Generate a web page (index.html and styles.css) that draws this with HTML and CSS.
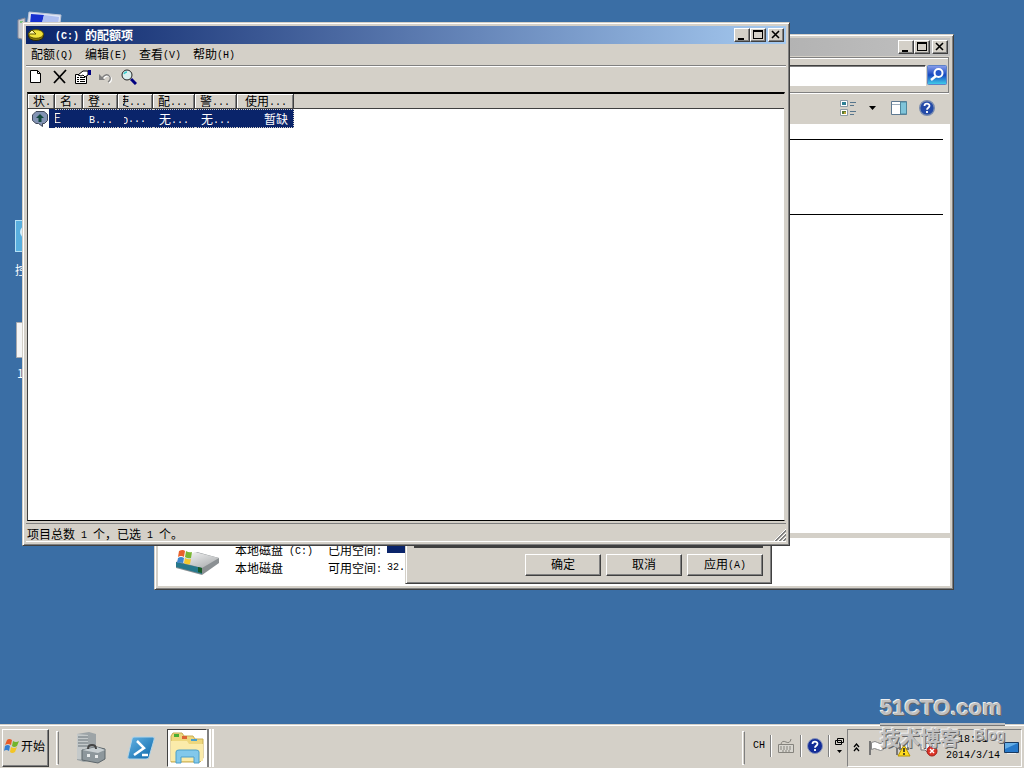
FILE: index.html
```
<!DOCTYPE html>
<html lang="zh-CN">
<head>
<meta charset="utf-8">
<title>(C:) 的配额项</title>
<link rel="stylesheet" href="styles.css">
</head>
<body>
<main class="desktop">
  <div class="shortcut computer">
    <svg width="48" height="36" viewBox="0 0 48 36"><path d="M3 9l7-2v22l-7-2z" fill="#c9cdd2" stroke="#889"/><path d="M5 11h3" stroke="#3b3"/><path d="M14 1l32 3-3 24-32-4z" fill="#dde5f5" stroke="#b9c2d4"/><path d="M16 3l13 1-5 20-10-1z" fill="#1730cf"/><path d="M29 4l15 2-2 15-18 3z" fill="#aebff0"/></svg>
  </div>
  <div class="shortcut control">
    <svg width="32" height="32" viewBox="0 0 32 32"><rect x=".5" y=".5" width="31" height="31" fill="#58aede" stroke="#b4e1f6"/><circle cx="11" cy="12" r="6" fill="#d8effa"/></svg>
    <span>控制</span>
  </div>
  <div class="shortcut file">
    <svg width="30" height="36" viewBox="0 0 30 36"><path d="M.5.5h29v35H.5z" fill="#f5f5f5" stroke="#a9aaae"/></svg>
    <span>1</span>
  </div>

  <section class="window explorer">
    <header class="titlebar inactive">
      <div class="caption-buttons">
        <button aria-label="最小化"><svg width="10" height="10" viewBox="0 0 10 10"><path d="M1 8h6v2H1z"/></svg></button>
        <button aria-label="最大化"><svg width="10" height="10" viewBox="0 0 10 10"><path d="M0 0h10v9H0zM1 2v6h8V2z" fill-rule="evenodd"/></svg></button>
        <button class="close" aria-label="关闭"><svg width="10" height="10" viewBox="0 0 10 10"><path d="M1 1l7 7M8 1L1 8" stroke="#000" stroke-width="1.600"/></svg></button>
      </div>
    </header>
    <div class="address">
      <input type="text" aria-label="搜索">
      <button class="search" aria-label="开始搜索"><svg width="20" height="20" viewBox="0 0 20 20"><defs><linearGradient id="sg" x2="0" y2="1"><stop stop-color="#8ca0ec"/><stop offset=".5" stop-color="#1648c0"/><stop offset="1" stop-color="#43d3ec"/></linearGradient></defs><rect x=".5" y=".5" width="19" height="19" rx="1" fill="url(#sg)" stroke="#5c82c8"/><circle cx="11.500" cy="8" r="4" fill="#2456c8" stroke="#fff" stroke-width="2"/><path d="M9 11l-5 4" stroke="#fff" stroke-width="2.500"/></svg></button>
    </div>
    <div class="commands">
      <svg width="16" height="16" viewBox="0 0 16 16"><path d="M.5.5h7v6h-7zM.5 9.500h7v6h-7z" fill="#fff" stroke="#8d9ba5"/><path d="M2 2h4v3H2z" fill="#2e7f94"/><path d="M2 11h4v3H2z" fill="#5b7b35"/><path d="M4 12h2v2H4z" fill="#c4a637"/><path d="M10 2.500h6M10 5.500h4M10 11.500h6M10 14.500h4" stroke="#57758c"/></svg>
      <svg class="drop" width="7" height="4" viewBox="0 0 7 4"><path d="M0 0h7L3.500 4z"/></svg>
      <svg class="pane" width="16" height="14" viewBox="0 0 16 14"><path d="M.5.5h15v13H.5z" fill="#fff" stroke="#5d7890"/><path d="M1 3.500h8" stroke="#9cadbc"/><path d="M9.500 1h6v12h-6z" fill="#7fc4da" stroke="#4e879d"/></svg>
      <svg width="16" height="16" viewBox="0 0 16 16"><circle cx="8" cy="8" r="7.300" fill="#234aa8" stroke="#7a8db0" stroke-width="1.400"/><path d="M5.500 6c0-3 5-3 5-.3 0 2-2.500 2-2.500 4M8 11v2" fill="none" stroke="#fff" stroke-width="1.800"/></svg>
    </div>
    <div class="files"><hr><hr></div>
    <div class="details">
      <svg width="46" height="28" viewBox="0 0 46 28"><defs><linearGradient id="disk" x2="1" y2="1"><stop stop-color="#fff"/><stop offset="1" stop-color="#a4a7a9"/></linearGradient></defs><path d="M1 13L22 3l22 6v5L27 26 1 19z" fill="#8b9093"/><path d="M1 12L20 3l24 6-17 10z" fill="url(#disk)"/><path d="M1 13l26 6v6L1 18z" fill="#26778b"/><path d="M23 18l4 1v5l-4-1z" fill="#175b27"/><path d="M4 2q4-2 6 0l-1 6q-3-2-6 0z" fill="#e8602a"/><path d="M11 2q3 2 6 1l-1 6q-3 1-6-1z" fill="#78b633"/><path d="M3 9q3-2 6 0l-1 5q-3-1-6 0z" fill="#3c86cf"/><path d="M10 9q3 2 6 1l-1 5q-3 1-6-1z" fill="#f4c92c"/></svg>
      <dl>
        <dt>本地磁盘<span class="latin"> (C:)</span></dt><dt>已用空间<span class="latin">:</span></dt><dd class="used"><meter min="0" max="1" value="1">已用</meter></dd>
        <dt>本地磁盘</dt><dt>可用空间<span class="latin">:</span></dt><dd class="latin">32.</dd>
      </dl>
    </div>
  </section>

  <section class="window dialog">
    <button>确定</button><button>取消</button><button>应用<span class="latin">(A)</span></button>
  </section>

  <section class="window quota">
    <header class="titlebar">
      <svg width="16" height="12" viewBox="0 0 16 12"><ellipse cx="8" cy="7" rx="7.500" ry="4.500" fill="#8a7a10" stroke="#2b2800"/><ellipse cx="8" cy="5" rx="7.500" ry="4.300" fill="#f0e23c" stroke="#5c5200"/><path d="M0 5l8 0-4-4z" fill="#fdf7a0" stroke="#5c5200"/></svg>
      <h1><span class="latin">(C:) </span>的配额项</h1>
      <div class="caption-buttons">
        <button aria-label="最小化"><svg width="10" height="10" viewBox="0 0 10 10"><path d="M1 8h6v2H1z"/></svg></button>
        <button aria-label="最大化"><svg width="10" height="10" viewBox="0 0 10 10"><path d="M0 0h10v9H0zM1 2v6h8V2z" fill-rule="evenodd"/></svg></button>
        <button class="close" aria-label="关闭"><svg width="10" height="10" viewBox="0 0 10 10"><path d="M1 1l7 7M8 1L1 8" stroke="#000" stroke-width="1.600"/></svg></button>
      </div>
    </header>
    <nav class="menu">
      <button>配额<span class="latin">(Q)</span></button><button>编辑<span class="latin">(E)</span></button><button>查看<span class="latin">(V)</span></button><button>帮助<span class="latin">(H)</span></button>
    </nav>
    <div class="toolbar">
      <button aria-label="新建"><svg width="16" height="16" viewBox="0 0 16 16"><path d="M1.500 1.500h7l3 3v9h-10z" fill="#fff" stroke="#000"/><path d="M8.500 1.500v3h3" fill="none" stroke="#000"/></svg></button>
      <button aria-label="删除"><svg width="16" height="16" viewBox="0 0 16 16"><path d="M2 2l11 12M14 1L2 14" stroke="#000" stroke-width="1.800"/></svg></button>
      <button aria-label="属性"><svg width="16" height="16" viewBox="0 0 16 16"><path d="M.5 5.500h11v9H.5z" fill="#fff" stroke="#000"/><path d="M2 8.500h2M5 8.500h5M2 10.500h2M5 10.500h5M2 12.500h2M5 12.500h5" stroke="#000"/><path d="M3 6l5-4h5v4l-3 2-2-2-2 1z" fill="#fff" stroke="#000"/><path d="M13 1h3v5h-3z" fill="#000080"/></svg></button>
      <button aria-label="撤消"><svg width="16" height="16" viewBox="0 0 16 16"><path d="M4 9q5-6 8-1 1 3-2 5" fill="none" stroke="#fff" stroke-width="1.500" transform="translate(1 1)"/><path d="M4 9q5-6 8-1 1 3-2 5" fill="none" stroke="#808080" stroke-width="1.300"/><path d="M1 5v6h6z" fill="#808080"/></svg></button>
      <button aria-label="查找"><svg width="16" height="16" viewBox="0 0 16 16"><path d="M10 10l5 5" stroke="#000080" stroke-width="3"/><circle cx="6" cy="6" r="5" fill="#d9eeee" stroke="#222"/><path d="M3 5q1-2 3-2" fill="none" stroke="#35cccc" stroke-width="1.500"/></svg></button>
    </div>
    <div class="list">
      <table>
        <colgroup><col class="c1"><col class="c2"><col class="c3"><col class="c3"><col class="c4"><col class="c4"><col class="c5"></colgroup>
        <thead><tr><th>状<i>.</i></th><th>名<i>.</i></th><th>登<i>..</i></th><th><span class="cut">使</span><i>...</i></th><th>配<i>...</i></th><th>警<i>...</i></th><th class="usage">使用<i>...</i></th></tr></thead>
        <tbody><tr><td class="state"><svg width="16" height="16" viewBox="0 0 16 16"><path d="M4 .5h8l3.500 3v6l-3 3h-2v3l-4-3H4l-3.500-3V4z" fill="#8293b4" stroke="#40495b"/><path d="M8 3l4 4H9.500v4h-3V7H4z" fill="#12483e"/></svg></td><td><span class="cut">正</span></td><td><i>B...</i></td><td><i><span class="cut half">D</span>...</i></td><td>无<i>...</i></td><td>无<i>...</i></td><td class="num">暂缺</td></tr></tbody>
      </table>
    </div>
    <footer class="status">
      <span>项目总数<span class="latin"> 1 </span>个，已选<span class="latin"> 1 </span>个。</span>
      <svg width="12" height="12" viewBox="0 0 12 12"><path d="M0 12L12 0M4 12l8-8M8 12l4-4" stroke="#fff"/><path d="M1 12L12 1M2 12L12 2M5 12l7-7M6 12l6-6M9 12l3-3M10 12l2-2" stroke="#808080"/></svg>
    </footer>
  </section>

  <footer class="taskbar">
    <button class="start"><svg width="16" height="16" viewBox="0 0 16 16"><path d="M3 2q2-2 5 0L7 7Q4 5 1 7z" fill="#e85b28"/><path d="M9 3q3 2 6 0l-2 5q-3 2-5 0z" fill="#72b52d"/><path d="M1 8q3-2 5 0l-1 5q-3-2-5 0z" fill="#347fd2"/><path d="M7 9q3 2 6 0l-2 5q-3 2-5 0z" fill="#f3c525"/></svg>开始</button>
    <span class="grip"></span>
    <button class="launch" aria-label="服务器管理器"><svg width="30" height="34" viewBox="0 0 30 34"><path d="M1 3l12-2 7 2v25L8 31l-7-2z" fill="#9da4a7"/><path d="M1 3l11 1v25L1 28z" fill="#c4c9ca"/><path d="M2 6h10M2 9h10M2 12h10M2 15h10" stroke="#687378"/><path d="M6 19l15-3 8 2v10l-7 4-16-3z" fill="#8d979c" stroke="#5d666b"/><path d="M6 19l16 3 7-3-8-3z" fill="#c7ced1"/><path d="M12 18q0-4 4-4t4 4" fill="none" stroke="#444" stroke-width="2"/><path d="M11 23h3v3h-3zM19 24h3v3h-3z" fill="#e7eaeb"/></svg></button>
    <button class="launch" aria-label="PowerShell"><svg width="30" height="26" viewBox="0 0 30 26"><defs><linearGradient id="ps" x2="1" y2="1"><stop stop-color="#67b4e4"/><stop offset="1" stop-color="#0966a9"/></linearGradient></defs><path d="M8 2h19q2 0 1 3l-5 17q0 2-3 2H3q-2 0-1-3L6 4q0-2 2-2z" fill="url(#ps)" stroke="#b4d5e8"/><path d="M11 6l7 7-10 7M16 20h6" fill="none" stroke="#fff" stroke-width="2.500"/></svg></button>
    <button class="launch active" aria-label="资源管理器"><svg width="34" height="32" viewBox="0 0 34 32"><path d="M1 4l2-3h9l2 3h9l2 3h8v19l-3 4H1z" fill="#eed77d" stroke="#c7ac55"/><path d="M4 2h5v3H4z" fill="#48ae34"/><path d="M12 4h5v3h-5z" fill="#dc6434"/><path d="M21 7h6v2h-6z" fill="#48a0cc"/><path d="M1 9h16l2 3h14v17H1z" fill="#fbebaa"/><path d="M6 20q0-2 3-2h17q3 0 3 2v11h-5v-6H11v6H6z" fill="#82c8eb" stroke="#4d9fc9"/></svg></button>
    <span class="stack"></span>
    <span class="spacer"></span>
    <span class="grip"></span>
    <div class="language">
      <span class="latin">CH</span>
      <span class="line"></span>
      <svg width="18" height="16" viewBox="0 0 18 16"><path d="M1.500 6.500h15v8h-15z" fill="#d8d6d0" stroke="#85837d"/><path d="M4 6q1-4 5-2t5-3" fill="none" stroke="#85837d"/><path d="M3 9h12M3 11h12M5 13h8" stroke="#85837d" stroke-dasharray="2 1"/></svg>
      <span class="line"></span>
      <svg width="16" height="16" viewBox="0 0 16 16"><circle cx="8" cy="8" r="7.500" fill="#132c97" stroke="#8794bb"/><path d="M5.500 6c0-3 5-3 5-.3 0 2-2.500 2-2.500 4M8 11v2" fill="none" stroke="#fff" stroke-width="1.800"/></svg>
      <span class="line"></span>
      <svg width="9" height="18" viewBox="0 0 9 18"><path d="M2.500 1.500h6v4h-6zM.5 3.500h6v4h-6z" fill="#d4d0c8" stroke="#000"/><path d="M2 13h5l-2.500 3z"/></svg>
    </div>
    <div class="tray">
      <svg width="7" height="9" viewBox="0 0 7 9"><path d="M1 4l2.500-3L6 4M1 8l2.500-3L6 8" fill="none" stroke="#000" stroke-width="1.300"/></svg>
      <svg width="18" height="18" viewBox="0 0 18 18"><path d="M2 2v14" stroke="#777" stroke-width="2"/><path d="M3.500 3.500q4-2 6 0t6 0v7q-3 2-6 0t-6 0z" fill="#fff" stroke="#888"/></svg>
      <svg width="18" height="18" viewBox="0 0 18 18"><path d="M3 1v15M6 4h8v6H6z" fill="#eee" stroke="#777" stroke-width="2"/><path d="M10 6l6 11H4z" fill="#ffdc20" stroke="#b59300"/><path d="M10 9v4M10 14v2" stroke="#222" stroke-width="1.500"/></svg>
      <svg width="18" height="18" viewBox="0 0 18 18"><path d="M1 6h4l5-5v15l-5-5H1z" fill="#f3f3f3" stroke="#777"/><circle cx="12" cy="12" r="5" fill="#dc3428" stroke="#a31c15"/><path d="M10 10l4 4M14 10l-4 4" stroke="#fff" stroke-width="1.500"/></svg>
      <time><span>18:51</span><span>2014/3/14</span></time>
      <svg class="show" width="15" height="14" viewBox="0 0 15 14"><path d="M.5 1.500h14v10H.5z" fill="#2678c9" stroke="#18395f"/><path d="M1 2h13L1 8z" fill="#63ade7"/><path d="M3 12h9v1H3z" fill="#eee"/></svg>
    </div>
  </footer>

  <aside class="watermark"><strong>51CTO.com</strong><div><span>技术博客</span><em>Blog</em></div></aside>
</main>
</body>
</html>
```
FILE: styles.css
```
* { box-sizing: border-box; }
body { margin: 0; font: 12px/16px "Noto Sans CJK SC", sans-serif; color: #000; }
button { padding: 0; border: 0; background: none; font: inherit; color: inherit; }
svg { display: block; flex: none; }
.latin, i { font-family: "Liberation Mono", monospace; font-size: 10px; font-style: normal; line-height: 0; vertical-align: 1px; white-space: pre; }
.desktop { position: relative; min-height: 100vh; overflow: hidden; background: #3a6ea5; }

.shortcut { position: absolute; color: #fff; }
.shortcut span { display: block; }
.computer { left: 15px; top: 11px; }
.control { left: 15px; top: 220px; }
.control span { margin-top: 10px; }
.file { left: 16px; top: 322px; }
.file span { margin: 7px 0 0 1px; }

.window { position: absolute; display: flex; flex-direction: column; background: #d4d0c8; border: 1px solid #d4d0c8; border-right-color: #404040; border-bottom-color: #404040; box-shadow: inset 1px 1px #fff, inset -1px -1px #808080; }
.quota { left: 22px; top: 22px; width: 768px; height: 524px; padding: 3px; }
.explorer { left: 154px; top: 34px; width: 800px; height: 556px; padding: 3px; }
.dialog { left: 405px; top: 530px; width: 367px; height: 54px; padding: 0 8px 7px; flex-direction: row; align-items: flex-end; justify-content: flex-end; gap: 5px; }
.dialog::before { content: ""; position: absolute; top: 15px; left: 8px; right: 8px; height: 2px; background: #404040; }
.dialog button { width: 76px; height: 22px; padding-bottom: 2px; }
.dialog button, .caption-buttons button, .start { background: #d4d0c8; border: 1px solid #fff; border-right-color: #404040; border-bottom-color: #404040; box-shadow: inset -1px -1px #808080; }

.titlebar { display: flex; align-items: center; flex: none; height: 18px; padding: 0 2px; background: linear-gradient(90deg, #0a246a, #a6caf0); color: #fff; }
.titlebar h1 { margin: 0 0 0 11px; font-size: 12px; line-height: 18px; }
.inactive { background: linear-gradient(90deg, #808080, #c0c0c0); }
.caption-buttons { display: flex; margin-left: auto; }
.caption-buttons button { display: flex; justify-content: center; width: 16px; height: 14px; padding-top: 1px; }
.caption-buttons .close { margin-left: 2px; }

.menu { display: flex; align-items: center; flex: none; gap: 12px; height: 22px; padding: 0 0 2px 5px; border-bottom: 1px solid #808080; box-shadow: 0 1px #fff; }
.menu button { white-space: nowrap; }
.toolbar { display: flex; align-items: center; flex: none; gap: 7px; height: 26px; padding: 0 3px 4px; }
.list { flex: 1; margin: 0 1px; border: 1px solid #000; border-color: #000 #d4d0c8 #000 #404040; border-top-width: 2px; background: linear-gradient(#d4d0c8 14px, #404040 14px, #404040 15px, #fff 15px); }
table { width: 266px; table-layout: fixed; border-collapse: separate; border-spacing: 0; }
.c1 { width: 27px; } .c2 { width: 28px; } .c3 { width: 35px; } .c4 { width: 42px; } .c5 { width: 57px; }
th, td { padding: 0 0 0 5px; white-space: nowrap; text-align: left; font-weight: normal; }
th { height: 15px; line-height: 14px; border-right: 1px solid #404040; border-bottom: 1px solid #404040; box-shadow: inset 1px 1px #fff, inset -1px 0 #808080; }
th.usage { padding-left: 8px; }
td { height: 17px; line-height: 15px; padding-left: 6px; color: #fff; background: #0a246a; border: dotted #d4d0c8; border-width: 1px 0; }
td.state { padding: 0 0 0 4px; border: 0; background: linear-gradient(90deg, #fff 21px, #0a246a 21px); }
td:nth-child(2) { padding-left: 0; }
td.num { padding-right: 5px; border-right-width: 1px; text-align: right; }
.cut { display: inline-flex; justify-content: flex-end; width: 6px; height: 14px; overflow: hidden; line-height: 14px; vertical-align: top; }
.half { width: 4px; height: 10px; line-height: 10px; vertical-align: -2px; }
.status { display: flex; align-items: center; justify-content: space-between; flex: none; height: 19px; margin-top: 2px; padding-left: 1px; border-top: 1px solid #808080; border-bottom: 1px solid #fff; }
.status > span { padding-top: 2px; }
.status svg { align-self: flex-end; }

.address { display: flex; align-items: center; justify-content: flex-end; flex: none; gap: 1px; height: 36px; margin: 1px 1px 0 0; padding-right: 1px; border: 1px solid #808080; box-shadow: inset 1px 1px #fff, 0 1px #fff; }
.address input { flex: 1; height: 21px; background: #fff; border: 1px solid #fff; border-top-color: #404040; box-shadow: inset 0 1px #808080; }
.commands { display: flex; align-items: center; justify-content: flex-end; flex: none; height: 31px; padding: 0 15px 2px 0; }
.drop { margin: 0 15px 0 13px; }
.pane { margin-right: 12px; }
.files { flex: 1; padding-right: 7px; background: #fff; }
.files hr { height: 1px; margin: 15px 0 74px; border: 0; background: #000; }
.files hr + hr { margin: 0; }
.details { display: flex; align-items: flex-end; flex: none; gap: 14px; height: 53px; padding: 0 0 9px 17px; background: #fff; border-top: 5px solid #d4d0c8; }
dl { display: grid; grid-template-columns: 93px 59px 1fr; grid-auto-rows: 18px; align-items: center; margin: 0; line-height: 18px; }
dt, dd { margin: 0; white-space: nowrap; }
.used { align-self: start; }
meter { display: block; width: 120px; height: 12px; appearance: none; background: #0a246a; }
meter::-webkit-meter-bar, meter::-webkit-meter-optimum-value { background: #0a246a; border: 0; border-radius: 0; }

.taskbar { position: absolute; left: 0; right: 0; bottom: 0; display: flex; align-items: center; height: 44px; padding: 2px 2px 0; background: #d4d0c8; border-top: 1px solid #d4d0c8; box-shadow: inset 0 1px #fff; }
.start { display: flex; align-items: center; gap: 1px; width: 47px; height: 38px; padding: 0 0 3px 1px; white-space: nowrap; }
.grip { width: 3px; height: 34px; margin: 0 7px; border: 1px solid #fff; border-right-color: #808080; }
.launch { display: grid; place-items: center; width: 50px; height: 38px; }
.launch.active { width: 40px; margin-left: 1px; background: #fff; border: 1px solid #404040; border-color: #404040 #fff #fff #404040; }
.stack { width: 7px; height: 38px; border: solid #fff; border-width: 0 2px; border-left-color: #808080; box-shadow: inset 2px 0 #fff; }
.spacer { flex: 1; }
.language { display: flex; align-items: center; gap: 5px; height: 38px; padding: 0 3px 3px 1px; }
.line { width: 2px; height: 22px; border-left: 1px solid #808080; background: #fff; }
.tray { display: flex; align-items: center; gap: 8px; width: 175px; height: 38px; padding: 0 2px 0 5px; border: 1px solid #808080; border-right-color: #fff; border-bottom-color: #fff; }
.tray time { display: grid; justify-items: center; margin-left: auto; font: 10px/16px "Liberation Mono", monospace; }
.tray .show { margin-left: -4px; }

.watermark { position: absolute; right: 19px; bottom: 17px; width: 125px; color: #c0c0c0; text-shadow: 1px 1px #666, -1px -1px #eee; }
.watermark strong { display: block; border-bottom: 2px solid #c0c0c0; font: bold 22px/30px "Liberation Sans Narrow", "Liberation Sans", sans-serif; box-shadow: 0 1px #777; }
.watermark div { display: flex; justify-content: space-between; font-size: 20px; line-height: 26px; font-weight: bold; }
.watermark em { font: bold 14px/20px "Liberation Sans", sans-serif; }
```
